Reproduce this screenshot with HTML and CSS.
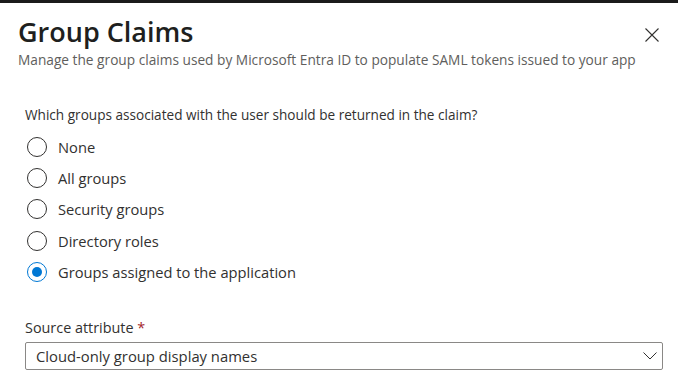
FILE: index.html
```html
<!DOCTYPE html>
<html lang="en">
<head>
<meta charset="UTF-8">
<meta name="viewport" content="width=device-width, initial-scale=1.0">
<title>Group Claims</title>
<link rel="stylesheet" href="styles.css">
</head>
<body>
<div class="top-bar"></div>
<div class="panel">
    <div class="panel-header">
        <div>
            <h1 class="title">Group Claims</h1>
            <p class="subtitle">Manage the group claims used by Microsoft Entra ID to populate SAML tokens issued to your app</p>
        </div>
        <button class="close-button" aria-label="Close">
            <svg width="14" height="14" viewBox="0 0 14 14"><path d="M0.5 0.5L13.5 13.5M13.5 0.5L0.5 13.5" stroke="#323130" stroke-width="1.1" fill="none"/></svg>
        </button>
    </div>
    <div class="panel-body">
        <p class="question">Which groups associated with the user should be returned in the claim?</p>
        <div class="radio-group">
            <label class="radio"><span class="circle"></span>None</label>
            <label class="radio"><span class="circle"></span>All groups</label>
            <label class="radio"><span class="circle"></span>Security groups</label>
            <label class="radio"><span class="circle"></span>Directory roles</label>
            <label class="radio checked"><span class="circle"></span>Groups assigned to the application</label>
        </div>
        <p class="field-label">Source attribute <span class="required">*</span></p>
        <div class="dropdown">
            <span>Cloud-only group display names</span>
            <svg width="14" height="8" viewBox="0 0 14 8"><path d="M0.5 0.5L7 7L13.5 0.5" stroke="#323130" stroke-width="1" fill="none"/></svg>
        </div>
    </div>
</div>
</body>
</html>
```
FILE: styles.css
```css
body {
    margin: 0;
    font-family: "Open Sans", "Noto Sans", sans-serif;
    color: #323130;
    background-color: white;
}
.top-bar {
    height: 3px;
    background-color: #1b1b1b;
}
.panel {
    padding: 0 15px 0 18px;
}
.panel-header {
    display: flex;
    justify-content: space-between;
    align-items: flex-start;
}
.title {
    margin: 10px 0 0;
    font-size: 27px;
    font-weight: 600;
    line-height: 37px;
    color: #201f1e;
}
.subtitle {
    margin: 0;
    font-size: 13.7px;
    line-height: 20px;
    color: #605e5c;
}
.close-button {
    margin: 25px 4px 0 0;
    padding: 0;
    border: none;
    background: none;
    display: flex;
}
.panel-body {
    padding-left: 7px;
}
.question {
    margin: 35px 0 6px;
    font-size: 13.6px;
    line-height: 20px;
}
.radio-group {
    display: flex;
    flex-direction: column;
}
.radio {
    display: flex;
    align-items: center;
    height: 31.3px;
    font-size: 14.7px;
    padding-left: 2px;
}
.circle {
    box-sizing: border-box;
    width: 20px;
    height: 20px;
    border: 1px solid #323130;
    border-radius: 50%;
    margin-right: 11px;
    display: flex;
    align-items: center;
    justify-content: center;
}
.radio.checked .circle {
    border-color: #0078d4;
}
.radio.checked .circle::after {
    content: "";
    width: 10px;
    height: 10px;
    border-radius: 50%;
    background-color: #0078d4;
}
.field-label {
    margin: 31px 0 4px;
    font-size: 14.4px;
    line-height: 20px;
}
.required {
    color: #a4262c;
}
.dropdown {
    box-sizing: border-box;
    height: 28px;
    border: 1px solid #8a8886;
    border-radius: 2px;
    display: flex;
    align-items: center;
    justify-content: space-between;
    padding: 0 5px 0 10px;
    font-size: 14.8px;
}
```
